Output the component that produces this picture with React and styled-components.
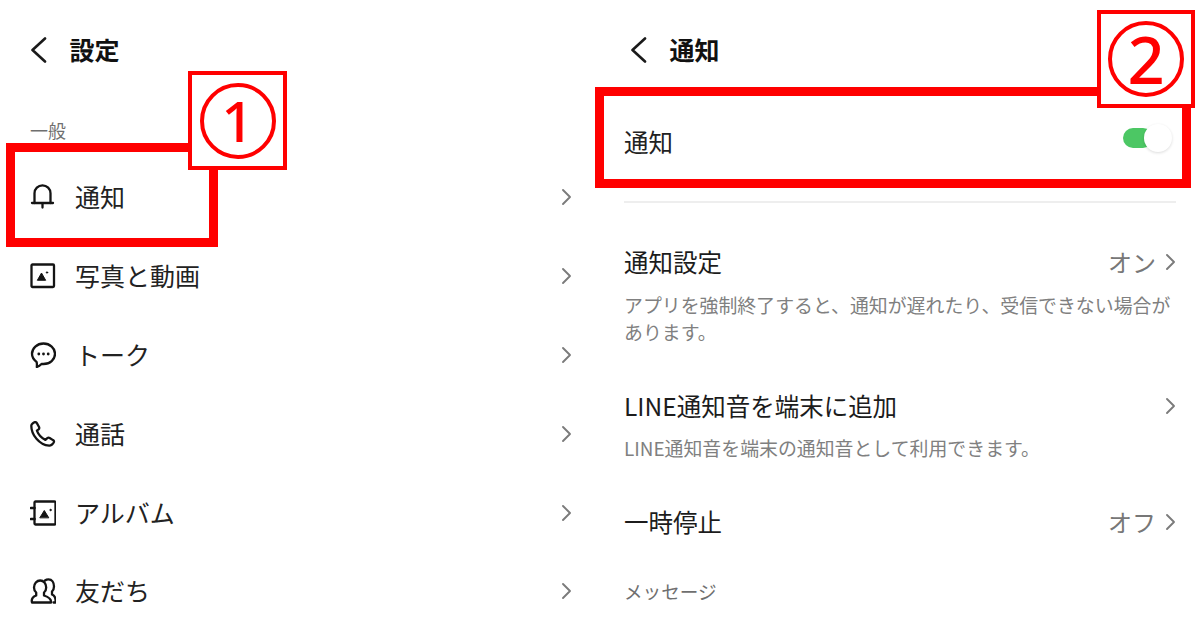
import React from 'react';
import styled, { createGlobalStyle } from 'styled-components';

const GlobalStyle = createGlobalStyle`
  html, body {
    margin: 0;
    background: #fff;
    overflow: hidden;
  }
  * {
    box-sizing: border-box;
  }
`;

const Page = styled.div`
  position: relative;
  display: grid;
  grid-template-columns: 600px 600px;
  width: 1200px;
  height: 636px;
  overflow: hidden;
  background: #fff;
  color: #1c1c1c;
  font-family: 'Noto Sans CJK JP', 'Noto Sans', sans-serif;
`;

const Panel = styled.section`
  display: flex;
  flex-direction: column;
  padding: 0 ${(p) => p.$right}px 0 ${(p) => p.$left}px;
`;

const Header = styled.header`
  display: flex;
  align-items: center;
  gap: 22.5px;
  height: 100px;
  padding-left: ${(p) => p.$indent || 0}px;
`;

const Title = styled.h1`
  margin: -2px 0 0;
  font-size: 25px;
  line-height: 36px;
  font-weight: 700;
  color: #111;
`;

const SectionLabel = styled.div`
  font-size: ${(p) => p.$size}px;
  line-height: 27px;
  color: #6f6f6f;
  margin-top: ${(p) => p.$top}px;
`;

const MenuList = styled.ul`
  list-style: none;
  margin: 14px 0 0;
  padding: 0;
`;

const MenuRow = styled.li`
  display: flex;
  align-items: center;
  height: 78.8px;
  gap: 19px;
`;

const MenuLabel = styled.span`
  flex: 1;
  margin-bottom: 2px;
  font-size: 25px;
  line-height: 36px;
  color: #222;
`;

const IconBox = styled.svg`
  display: block;
  flex: none;
  width: 26px;
  height: 26px;
`;

const Chevron = styled.svg`
  display: block;
  flex: none;
  width: 11px;
  height: 18px;
  margin-left: ${(p) => p.$gap || 0}px;
`;

const SwitchRow = styled.div`
  display: flex;
  align-items: center;
  justify-content: space-between;
  height: 86px;
  font-size: 24.5px;
  color: #222;
`;

const SwitchLabel = styled.span`
  line-height: 36px;
  margin-top: -2px;
`;

const Toggle = styled.div`
  position: relative;
  width: 49px;
  height: 28px;
  margin-top: -10px;
  margin-right: 4px;
`;

const ToggleTrack = styled.div`
  position: absolute;
  left: 0;
  top: 4px;
  width: 30px;
  height: 20px;
  border-radius: 10px;
  background: #4cc764;
`;

const ToggleKnob = styled.div`
  position: absolute;
  right: 0;
  top: 0;
  width: 28px;
  height: 28px;
  border-radius: 50%;
  background: #fff;
  box-shadow: 0 1px 3px rgba(0, 0, 0, 0.14);
`;

const Divider = styled.hr`
  width: 100%;
  height: 2px;
  margin: 15px 0 0;
  border: 0;
  background: #eeeeee;
`;

const Setting = styled.div`
  margin-top: ${(p) => p.$top}px;
`;

const SettingHead = styled.div`
  display: flex;
  align-items: center;
  justify-content: space-between;
  height: 36px;
`;

const SettingTitle = styled.span`
  font-size: 24.5px;
  line-height: 36px;
  color: #1c1c1c;
`;

const SettingValue = styled.span`
  display: flex;
  align-items: center;
  font-size: 24px;
  line-height: 36px;
  color: #777;
`;

const SettingNote = styled.p`
  margin: ${(p) => p.$top}px 0 0;
  font-size: 18.9px;
  line-height: 27px;
  color: #808080;
`;

const Frame = styled.div`
  position: absolute;
  left: ${(p) => p.$x}px;
  top: ${(p) => p.$y}px;
  width: ${(p) => p.$w}px;
  height: ${(p) => p.$h}px;
  border: 9px solid #ff0000;
`;

const Badge = styled.div`
  position: absolute;
  left: ${(p) => p.$x}px;
  top: ${(p) => p.$y}px;
  display: flex;
  align-items: center;
  justify-content: center;
  width: ${(p) => p.$w}px;
  height: ${(p) => p.$w}px;
  border: 4.5px solid #ff0000;
  background: #fff;
`;

const Ring = styled.div`
  display: flex;
  align-items: center;
  justify-content: center;
  width: 76px;
  height: 76px;
  border: 4px solid #ff0000;
  border-radius: 50%;
  color: #ff0000;
  font-family: 'Noto Sans', sans-serif;
  font-size: ${(p) => p.$size}px;
  font-weight: 500;
  line-height: 1;
`;

function BackIcon() {
  return (
    <svg width="17" height="26" viewBox="0 0 17 26" fill="none" stroke="#1a1a1a" strokeWidth="2.6" strokeLinecap="round" strokeLinejoin="round">
      <path d="M15 1.5 2.5 13 15 24.5" />
    </svg>
  );
}

function RowChevron({ gap }) {
  return (
    <Chevron $gap={gap} viewBox="0 0 11 18" fill="none" stroke="#7b7b7b" strokeWidth="1.9" strokeLinecap="round" strokeLinejoin="round">
      <path d="M2 2l7 7-7 7" />
    </Chevron>
  );
}

const iconProps = {
  viewBox: '0 0 26 26',
  fill: 'none',
  stroke: '#141414',
  strokeWidth: 2.3,
  strokeLinecap: 'round',
  strokeLinejoin: 'round',
};

const icons = {
  bell: (
    <>
      <path d="M2 19h21" />
      <path d="M4.500 19V9.300a8 8 0 0 1 16 0V19" />
      <path d="M12.500 19.500v4" />
    </>
  ),
  photo: (
    <>
      <rect x="1.500" y="1.500" width="22.500" height="22.500" rx="1" />
      <path d="M7.500 17l4-7 4 7z" fill="#141414" strokeWidth="1" />
      <circle cx="17" cy="9.500" r="0.7" fill="#141414" strokeWidth="1" />
    </>
  ),
  chat: (
    <>
      <path d="M13.500 1.500C20 1.500 25 6.200 25 11.800 25 17.500 20 22 13.500 22h-2c-1.500 1.500-3 2.500-4.700 3 .2-2 .2-4-.3-5.200C3.800 17.800 2 15 2 11.800 2 6.200 7 1.500 13.500 1.500z" />
      <g fill="#141414" stroke="none">
        <circle cx="8.800" cy="12" r="1.400" />
        <circle cx="13.500" cy="12" r="1.400" />
        <circle cx="18.200" cy="12" r="1.400" />
      </g>
    </>
  ),
  phone: (
    <g transform="translate(-1.500 -1.500) scale(1.12)" strokeWidth="2.050">
      <path d="M2.500 5.500c0-1.200 2.300-3.200 3.500-3.200.8 0 1.200.5 1.600 1.200l1.800 3.200c.4.800.2 1.500-.4 2.100L7.500 10c1.300 3.500 4 6.500 7.600 8.200l1.700-1.500c.7-.6 1.400-.6 2.100-.2l3 1.900c.7.400 1 1 .8 1.700-.4 1.400-2.700 3.400-4.200 3.300C9.500 22.700 2.500 13.500 2.500 5.500z" />
    </g>
  ),
  album: (
    <>
      <rect x="4.500" y="1.500" width="21" height="23" rx="1" />
      <path d="M1 8h3.500M1 19h3.500" strokeWidth="2.600" />
      <path d="M10 17.500l4.300-7 4.300 7z" fill="#141414" strokeWidth="1" />
      <circle cx="20.500" cy="10" r="0.7" fill="#141414" strokeWidth="1" />
    </>
  ),
  friends: (
    <>
      <path d="M2 24.500h19c.5-3-1-5-7-7v-3c1.500-1.300 2.200-3 2.200-5 0-4-2.600-7-6-7s-6.200 3-6.200 7c0 2 .7 3.700 2.200 5v3c-4 1.500-5 4-4.200 7z" />
      <path d="M15 2.500c1-.8 2.200-1.200 3.500-1.200 3.400 0 5.500 3 5.500 7.200 0 2-.7 3.700-2 5v3c2.500 1 4 3.500 3.500 8h-2" />
    </>
  ),
};

const menuItems = [
  { icon: 'bell', label: '通知' },
  { icon: 'photo', label: '写真と動画' },
  { icon: 'chat', label: 'トーク' },
  { icon: 'phone', label: '通話' },
  { icon: 'album', label: 'アルバム' },
  { icon: 'friends', label: '友だち' },
];

export default function App() {
  return (
    <Page>
      <GlobalStyle />
      <Panel $left={30} $right={28}>
        <Header>
          <BackIcon />
          <Title>設定</Title>
        </Header>
        <SectionLabel $size={18} $top={17}>一般</SectionLabel>
        <MenuList>
          {menuItems.map((item) => (
            <MenuRow key={item.label}>
              <IconBox {...iconProps}>{icons[item.icon]}</IconBox>
              <MenuLabel>{item.label}</MenuLabel>
              <RowChevron />
            </MenuRow>
          ))}
        </MenuList>
      </Panel>

      <Panel $left={24} $right={24}>
        <Header $indent={6}>
          <BackIcon />
          <Title>通知</Title>
        </Header>
        <SwitchRow>
          <SwitchLabel>通知</SwitchLabel>
          <Toggle>
            <ToggleTrack />
            <ToggleKnob />
          </Toggle>
        </SwitchRow>
        <Divider />
        <Setting $top={41}>
          <SettingHead>
            <SettingTitle>通知設定</SettingTitle>
            <SettingValue>オン<RowChevron gap={9} /></SettingValue>
          </SettingHead>
          <SettingNote $top={11}>アプリを強制終了すると、通知が遅れたり、受信できない場合があります。</SettingNote>
        </Setting>
        <Setting $top={43}>
          <SettingHead>
            <SettingTitle>LINE通知音を端末に追加</SettingTitle>
            <RowChevron />
          </SettingHead>
          <SettingNote $top={10}>LINE通知音を端末の通知音として利用できます。</SettingNote>
        </Setting>
        <Setting $top={43}>
          <SettingHead>
            <SettingTitle>一時停止</SettingTitle>
            <SettingValue>オフ<RowChevron gap={9} /></SettingValue>
          </SettingHead>
        </Setting>
        <SectionLabel $size={18.6} $top={37}>メッセージ</SectionLabel>
      </Panel>

      <Frame $x={6} $y={143} $w={212} $h={104} />
      <Badge $x={188} $y={71} $w={99}>
        <Ring $size={57}>1</Ring>
      </Badge>
      <Frame $x={595} $y={87} $w={596} $h={101} />
      <Badge $x={1097} $y={10} $w={98}>
        <Ring $size={65}>2</Ring>
      </Badge>
    </Page>
  );
}
